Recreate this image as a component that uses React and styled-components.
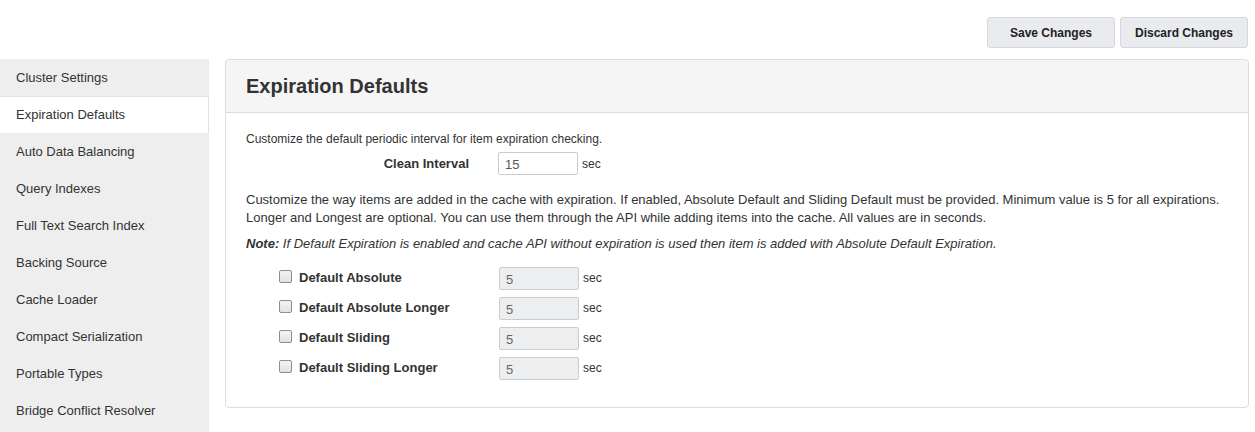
import React from "react";
import styled, { createGlobalStyle } from "styled-components";

const Global = createGlobalStyle`
  html, body { margin: 0; padding: 0; background: #fff; }
  body {
    font-family: "Liberation Sans", Arial, Helvetica, sans-serif;
    font-size: 13px;
    color: #333;
    overflow: hidden;
  }
  * { box-sizing: border-box; }
`;

const Page = styled.div`
  width: 1255px;
  height: 432px;
  overflow: hidden;
`;

const Toolbar = styled.div`
  display: flex;
  justify-content: flex-end;
  gap: 5px;
  padding: 17px 7px 0 0;
  height: 59px;
`;

const Button = styled.button`
  width: 128px;
  height: 31px;
  background: #e9ebee;
  border: 1px solid #d6d9dc;
  border-radius: 3px;
  font-family: inherit;
  font-size: 12px;
  font-weight: bold;
  color: #222;
  cursor: pointer;
  padding: 0;
`;

const Main = styled.div`
  display: flex;
  align-items: flex-start;
  gap: 16px;
`;

const Sidebar = styled.nav`
  width: 209px;
  flex: 0 0 209px;
  background: #eeeeee;
  height: 380px;
  display: flex;
  flex-direction: column;
`;

const NavItem = styled.div`
  height: 37px;
  flex: 0 0 37px;
  display: flex;
  align-items: center;
  padding: 0 0 2px 16px;
  font-size: 13px;
  color: #333;
  background: ${(p) => (p.$active ? "#fff" : "transparent")};
  border-top: 1px solid ${(p) => (p.$active ? "#e2e2e2" : "transparent")};
  border-right: 1px solid ${(p) => (p.$active ? "#e2e2e2" : "transparent")};
`;

const Panel = styled.section`
  width: 1024px;
  border: 1px solid #dddddd;
  border-radius: 4px;
  background: #fff;
`;

const PanelHeader = styled.header`
  height: 53px;
  background: #f5f5f5;
  border-bottom: 1px solid #dddddd;
  border-radius: 4px 4px 0 0;
  display: flex;
  align-items: center;
  padding: 0 20px;
`;

const Title = styled.h2`
  margin: 0;
  font-size: 20px;
  font-weight: bold;
  color: #333;
`;

const PanelBody = styled.div`
  padding: 17px 20px 24px 20px;
  line-height: 18px;
`;

const Text = styled.p`
  margin: ${(p) => p.$mt || 0}px 0 0 0;
  font-size: ${(p) => p.$size || 13}px;
  font-style: ${(p) => (p.$italic ? "italic" : "normal")};
`;

const FieldRow = styled.div`
  display: flex;
  align-items: center;
  height: ${(p) => p.$h || 30}px;
  margin-top: ${(p) => p.$mt || 0}px;
`;

const RightLabel = styled.label`
  width: 223px;
  text-align: right;
  font-weight: bold;
  font-size: 13px;
  margin-right: 29px;
`;

const CheckLabel = styled.label`
  display: flex;
  align-items: center;
  width: 220px;
  margin-left: 33px;
  font-weight: bold;
  font-size: 13px;
`;

const Check = styled.input`
  appearance: none;
  width: 13px;
  height: 13px;
  margin: 0 7px 3px 0;
  border: 1px solid #8e8e8e;
  border-radius: 2px;
  background: linear-gradient(#f4f4f4, #e2e2e2);
`;

const NumInput = styled.input`
  width: 80px;
  height: 23px;
  border: 1px solid #cccccc;
  border-radius: 2px;
  padding: 2px 6px 0;
  font-family: inherit;
  font-size: 13px;
  color: #555;
  background: ${(p) => (p.disabled ? "#eceeef" : "#fff")};
  &:disabled { color: #666; }
`;

const Unit = styled.span`
  margin-left: 4px;
  font-size: 12px;
`;

const Bold = styled.b`
  font-weight: bold;
`;

const CheckList = styled.div`
  margin-top: 10px;
`;

const navItems = [
  "Cluster Settings",
  "Expiration Defaults",
  "Auto Data Balancing",
  "Query Indexes",
  "Full Text Search Index",
  "Backing Source",
  "Cache Loader",
  "Compact Serialization",
  "Portable Types",
  "Bridge Conflict Resolver",
];

const defaults = [
  "Default Absolute",
  "Default Absolute Longer",
  "Default Sliding",
  "Default Sliding Longer",
];

export default function App() {
  return (
    <Page>
      <Global />
      <Toolbar>
        <Button>Save Changes</Button>
        <Button>Discard Changes</Button>
      </Toolbar>
      <Main>
        <Sidebar>
          {navItems.map((n) => (
            <NavItem key={n} $active={n === "Expiration Defaults"}>
              {n}
            </NavItem>
          ))}
        </Sidebar>
        <Panel>
          <PanelHeader>
            <Title>Expiration Defaults</Title>
          </PanelHeader>
          <PanelBody>
            <Text $size={12}>Customize the default periodic interval for item expiration checking.</Text>
            <FieldRow $h={23} $mt={4}>
              <RightLabel>Clean Interval</RightLabel>
              <NumInput defaultValue="15" />
              <Unit>sec</Unit>
            </FieldRow>
            <Text $mt={16}>
              Customize the way items are added in the cache with expiration. If enabled, Absolute Default and Sliding Default must be provided. Minimum value is 5 for all expirations. Longer and Longest are optional. You can use them through the API while adding items into the cache. All values are in seconds.
            </Text>
            <Text $mt={8} $italic>
              <Bold>Note:</Bold> If Default Expiration is enabled and cache API without expiration is used then item is added with Absolute Default Expiration.
            </Text>
            <CheckList>
              {defaults.map((d) => (
                <FieldRow key={d}>
                  <CheckLabel>
                    <Check type="checkbox" />
                    {d}
                  </CheckLabel>
                  <NumInput defaultValue="5" disabled />
                  <Unit>sec</Unit>
                </FieldRow>
              ))}
            </CheckList>
          </PanelBody>
        </Panel>
      </Main>
    </Page>
  );
}
